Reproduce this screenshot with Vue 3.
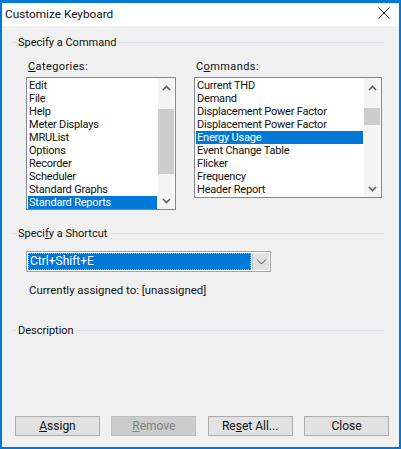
<script setup>
const categories = ['Edit', 'File', 'Help', 'Meter Displays', 'MRUList', 'Options', 'Recorder', 'Scheduler', 'Standard Graphs', 'Standard Reports']
const commands = ['Current THD', 'Demand', 'Displacement Power Factor', 'Displacement Power Factor', 'Energy Usage', 'Event Change Table', 'Flicker', 'Frequency', 'Header Report']
</script>

<template>
  <div class="dialog">
    <div class="titlebar">
      <span class="title">Customize Keyboard</span>
      <svg class="close-x" width="12" height="12" viewBox="0 0 12 12">
        <path d="M.5 .5 L11.5 11.5 M11.5 .5 L.5 11.5" stroke="#222" stroke-width="1" fill="none" />
      </svg>
    </div>
    <div class="body">
      <div class="group-head first"><span>Specify a Command</span><i /></div>
      <div class="lists">
        <div class="col col-cat">
          <label><u>C</u>ategories:</label>
          <div class="listbox cat">
            <ul>
              <li v-for="c in categories" :key="c" :class="{ sel: c === 'Standard Reports' }">{{ c }}</li>
            </ul>
            <div class="scroll">
              <svg class="arrow" width="9" height="6" viewBox="0 0 9 6"><path d="M1 5 L4.5 1.5 L8 5" stroke="#606060" stroke-width="1.6" fill="none" /></svg>
              <div class="thumb thumb-cat" />
              <svg class="arrow" width="9" height="6" viewBox="0 0 9 6"><path d="M1 1 L4.5 4.5 L8 1" stroke="#606060" stroke-width="1.6" fill="none" /></svg>
            </div>
          </div>
        </div>
        <div class="col col-cmd">
          <label>C<u>o</u>mmands:</label>
          <div class="listbox cmd">
            <ul>
              <li v-for="(c, i) in commands" :key="i" :class="{ sel: c === 'Energy Usage' }">{{ c }}</li>
            </ul>
            <div class="scroll">
              <svg class="arrow" width="9" height="6" viewBox="0 0 9 6"><path d="M1 5 L4.5 1.5 L8 5" stroke="#606060" stroke-width="1.6" fill="none" /></svg>
              <div class="thumb thumb-cmd" />
              <svg class="arrow" width="9" height="6" viewBox="0 0 9 6"><path d="M1 1 L4.5 4.5 L8 1" stroke="#606060" stroke-width="1.6" fill="none" /></svg>
            </div>
          </div>
        </div>
      </div>

      <div class="group-head shortcut"><span>Speci<u>f</u>y a Shortcut</span><i /></div>
      <div class="combo">
        <div class="combo-value"><span>Ctrl+Shift+E</span></div>
        <div class="combo-btn">
          <svg width="11" height="6" viewBox="0 0 11 6"><path d="M1 .5 L5.5 5 L10 .5" stroke="#444" stroke-width="1" fill="none" /></svg>
        </div>
      </div>
      <div class="assigned">Currently assigned to: [unassigned]</div>

      <div class="group-head description"><span>Description</span><i /></div>
      <div class="spacer" />

      <div class="buttons">
        <button><u>A</u>ssign</button>
        <button class="disabled" disabled><u>R</u>emove</button>
        <button>Re<u>s</u>et All...</button>
        <button>Close</button>
      </div>
    </div>
  </div>
</template>

<style>
html, body {
  margin: 0;
  padding: 0;
}
</style>

<style scoped>
.dialog {
  width: 401px;
  height: 449px;
  box-sizing: border-box;
  border: 2px solid #0078d7;
  border-top-width: 3px;
  display: flex;
  flex-direction: column;
  font-family: Roboto, "Noto Sans", sans-serif;
  font-size: 12px;
  color: #101010;
  background: #f0f0f0;
}
.titlebar {
  height: 23px;
  background: #fff;
  display: flex;
  align-items: center;
  justify-content: space-between;
  padding: 0 9px 3px 3px;
  box-sizing: border-box;
  flex: none;
}
.title {
  font-size: 11.8px;
  margin-top: 1px;
}
.body {
  flex: 1;
  display: flex;
  flex-direction: column;
  padding: 0 14px 0 9px;
  min-height: 0;
}
.group-head {
  display: flex;
  align-items: center;
  height: 16px;
  padding-left: 7px;
  position: relative;
  font-size: 11px;
}
.group-head::before {
  content: '';
  position: absolute;
  left: 0;
  width: 5px;
  top: 8px;
  border-top: 1px solid #dce3ea;
}
.group-head span {
  padding-right: 3px;
}
.group-head i {
  flex: 1;
  border-top: 1px solid #dce3ea;
}
.first {
  margin-top: 8px;
}
.shortcut {
  margin-top: 15px;
}
.description {
  margin-top: 24px;
}
.lists {
  display: flex;
  margin-top: 8px;
  padding-left: 15px;
}
.col label {
  display: block;
  height: 19px;
  line-height: 17px;
  padding-left: 2px;
  font-size: 11px;
  letter-spacing: 0.4px;
}
.col-cat {
  width: 150px;
  margin-right: 18px;
}
.col-cmd {
  width: 188px;
}
.listbox {
  box-sizing: border-box;
  border: 1px solid #82878f;
  background: #fff;
  display: flex;
  overflow: hidden;
  padding-right: 1px;
}
.cat {
  height: 133px;
}
.cmd {
  height: 121px;
}
ul {
  flex: 1;
  list-style: none;
  margin: 0;
  padding: 1px 0 0 1px;
  min-width: 0;
}
li {
  height: 13px;
  line-height: 13px;
  padding-left: 1px;
  white-space: nowrap;
  font-size: 11px;
  letter-spacing: -0.2px;
}
li.sel {
  background: #0078d7;
  color: #fff;
}
.scroll {
  width: 16px;
  margin-left: 1px;
  flex: none;
  display: flex;
  flex-direction: column;
  align-items: center;
  background: #f4f4f4;
}
.arrow {
  flex: none;
  margin: 7px 0 5px;
}
.thumb {
  width: 100%;
  background: #cdcdcd;
}
.thumb-cat {
  height: 65px;
  margin-top: 13px;
  margin-bottom: auto;
}
.thumb-cmd {
  height: 17px;
  margin-top: 12px;
  margin-bottom: auto;
}
.combo {
  box-sizing: border-box;
  display: flex;
  width: 245px;
  height: 21px;
  margin: 10px 0 0 15px;
  border: 1px solid #a4a4a4;
  background: #fff;
  padding: 1px;
}
.combo-value {
  flex: 1;
  box-sizing: border-box;
  background: #0078d7;
  color: #fff;
  outline: 1px dotted #e8a33a;
  outline-offset: -1px;
  padding-left: 2px;
  line-height: 16px;
}
.combo-btn {
  width: 16px;
  margin-left: 1px;
  background: #e1e1e1;
  border-left: 1px solid #c4c4c4;
  display: flex;
  align-items: center;
  justify-content: center;
}
.assigned {
  margin: 10px 0 0 18px;
  height: 16px;
  line-height: 16px;
  font-size: 11.4px;
}
.spacer {
  flex: 1;
}
.buttons {
  display: flex;
  justify-content: space-between;
  padding: 0 0 11px 4px;
  margin-right: -4px;
}
button {
  box-sizing: border-box;
  width: 85px;
  height: 20px;
  padding: 0;
  border: 1px solid #adadad;
  background: #e1e1e1;
  font: inherit;
  color: #101010;
}
button.disabled {
  background: #cccccc;
  border-color: #bfbfbf;
  color: #838383;
}
</style>
